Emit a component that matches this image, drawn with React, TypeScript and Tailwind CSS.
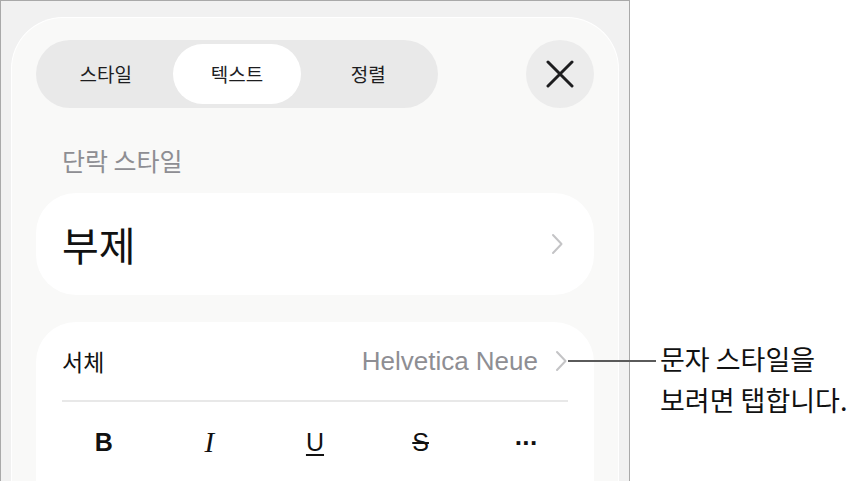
import { useState } from "react";

const KR = "font-['Noto_Sans_CJK_KR','Noto_Sans',sans-serif]";

const tabs = ["스타일", "텍스트", "정렬"];

function Chevron({ className = "" }: { className?: string }) {
  return (
    <svg width="14" height="22" viewBox="0 0 14 22" fill="none" className={className}>
      <path d="M3 2l8.5 9L3 20" stroke="currentColor" strokeWidth="2" strokeLinecap="round" strokeLinejoin="round" />
    </svg>
  );
}

function CloseIcon() {
  return (
    <svg width="28" height="28" viewBox="0 0 28 28" fill="none">
      <path d="M2 2l24 24M26 2L2 26" stroke="#1d1d1f" strokeWidth="3" strokeLinecap="round" />
    </svg>
  );
}

export default function App() {
  const [tab, setTab] = useState(1);

  return (
    <div className={`relative h-[481px] w-[857px] overflow-hidden bg-white ${KR}`}>
      {/* device frame */}
      <div className="h-full w-[630px] border-l border-r border-t border-[#a9a9a9] bg-[#f1f1f1] px-[10px] pt-[16px]">
        <div className="h-full rounded-t-[52px] border border-b-0 border-white bg-[#f9f9f8] px-[24px] pt-[22px]">
          {/* header */}
          <div className="flex items-center justify-between">
            <div className="grid h-[68px] w-[402px] grid-cols-3 rounded-full bg-[#e9e9e9] p-[4px]">
              {tabs.map((t, i) => (
                <button
                  key={t}
                  onClick={() => setTab(i)}
                  className={`mx-[2px] rounded-full text-[19px] text-[#1d1d1f] ${
                    i === tab ? "bg-white" : ""
                  }`}
                >
                  {t}
                </button>
              ))}
            </div>
            <button className="flex h-[68px] w-[68px] items-center justify-center rounded-full bg-[#ececec]">
              <CloseIcon />
            </button>
          </div>

          <div className="mt-[38px] pl-[26px] text-[25px] leading-[28px] text-[#8e8e93]">단락 스타일</div>

          {/* paragraph style */}
          <div className="mt-[19px] flex h-[102px] items-center justify-between rounded-[40px] bg-white pl-[26px] pr-[30px]">
            <span className="text-[40px] leading-none text-[#111]">부제</span>
            <Chevron className="text-[#c4c4c6]" />
          </div>

          {/* font card */}
          <div className="mt-[27px] h-[200px] rounded-[40px] bg-white px-[26px]">
            <div className="flex h-[80px] items-center justify-between border-b-2 border-[#e8e8e8]">
              <span className="text-[23px] text-[#111]">서체</span>
              <div className="flex items-center gap-[16px]">
                <span className="font-['Liberation_Sans',Arial,sans-serif] text-[26px] text-[#8e8e93]">
                  Helvetica Neue
                </span>
                <Chevron className="text-[#c4c4c6]" />
              </div>
            </div>
            <div className="-mx-[11px] grid h-[82px] grid-cols-5 items-center font-['Liberation_Sans',Arial,sans-serif] text-[25px] text-[#111]">
              <span className="text-center font-bold">B</span>
              <span className="text-center font-['Liberation_Serif',serif] text-[29px] italic">I</span>
              <span className="text-center underline decoration-2 underline-offset-[3px]">U</span>
              <span className="text-center line-through decoration-[1.5px]">S</span>
              <span className="text-center text-[26px] font-bold tracking-[-1px]">···</span>
            </div>
          </div>
        </div>
      </div>

      {/* callout */}
      <div className="absolute left-[568px] top-[360px] h-[2px] w-[88px] bg-[#5a5a5a]" />
      <div className="absolute left-[660px] top-[338px] text-[27px] leading-[41px] text-[#111]">
        <p>문자 스타일을</p>
        <p>보려면 탭합니다.</p>
      </div>
    </div>
  );
}
